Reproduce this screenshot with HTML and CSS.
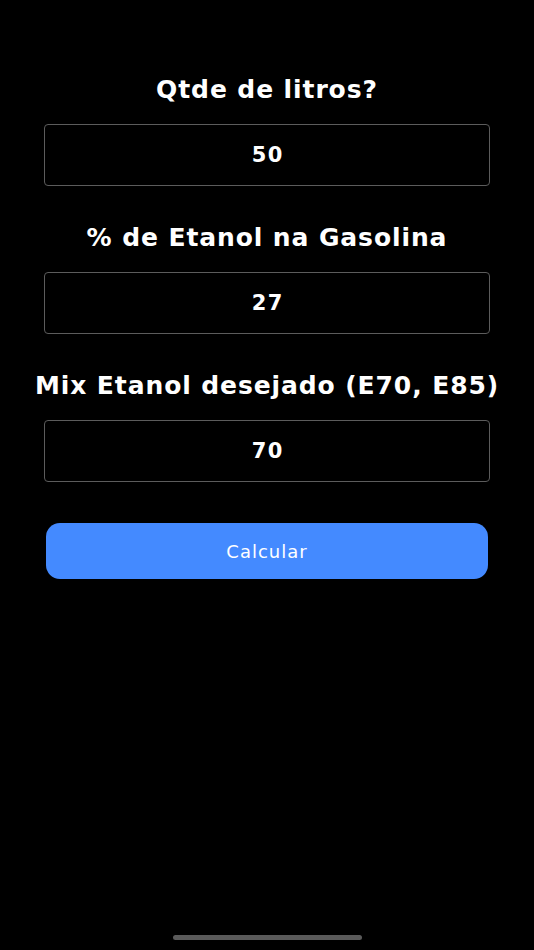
FILE: index.html
```
<!DOCTYPE html>
<html lang="pt">
<head>
    <meta charset="UTF-8">
    <title>Mix Etanol</title>
    <link rel="stylesheet" href="styles.css">
</head>
<body>

<div class="screen">
    <div class="form">
        <div class="field">
            <label class="label" for="litros">Qtde de litros?</label>
            <input class="box" id="litros" type="text" value="50">
        </div>
        <div class="field">
            <label class="label" for="etanol">% de Etanol na Gasolina</label>
            <input class="box" id="etanol" type="text" value="27">
        </div>
        <div class="field">
            <label class="label" for="mix">Mix Etanol desejado (E70, E85)</label>
            <input class="box" id="mix" type="text" value="70">
        </div>
        <button class="calc" type="button">Calcular</button>
    </div>
    <div class="home-bar"></div>
</div>

</body>
</html>
```

FILE: styles.css
```
html, body {
    margin: 0;
    padding: 0;
    background: #000;
}

.screen {
    width: 534px;
    height: 950px;
    display: flex;
    flex-direction: column;
    justify-content: space-between;
    align-items: center;
    font-family: "DejaVu Sans", sans-serif;
    color: #fff;
}

.form {
    width: 446px;
    padding-top: 73px;
    display: flex;
    flex-direction: column;
    align-items: center;
}

.field {
    width: 100%;
    display: flex;
    flex-direction: column;
    align-items: center;
    gap: 17px;
    margin-bottom: 35px;
}

.label {
    font-size: 25px;
    font-weight: 700;
    line-height: 34px;
    letter-spacing: 0.9px;
    white-space: nowrap;
}

.box {
    box-sizing: border-box;
    width: 446px;
    height: 62px;
    background: #000;
    border: 1.5px solid #5c5c5c;
    border-radius: 4px;
    color: #fff;
    font-family: inherit;
    font-size: 21px;
    font-weight: 700;
    letter-spacing: 1.5px;
    text-indent: 1.5px;
    text-align: center;
    outline: none;
}

.calc {
    margin-top: 6px;
    width: 442px;
    height: 56px;
    border: none;
    border-radius: 14px;
    background: #448aff;
    color: #fff;
    font-family: inherit;
    font-size: 18px;
    font-weight: 400;
    letter-spacing: 1px;
}

.home-bar {
    width: 189px;
    height: 5px;
    border-radius: 3px;
    background: #5a5a5a;
    margin-bottom: 10px;
}
```
